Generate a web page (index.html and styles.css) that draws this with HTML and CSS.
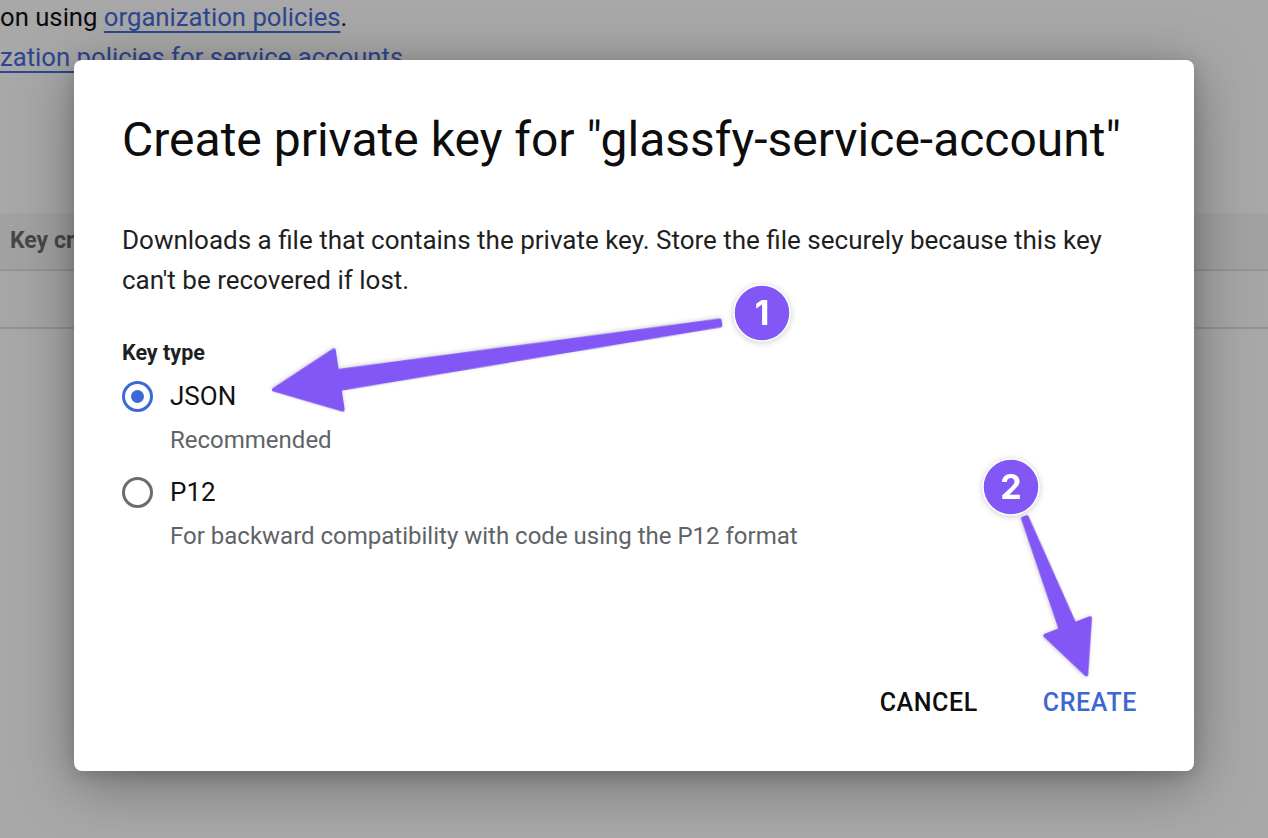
FILE: index.html
```html
<!DOCTYPE html>
<html>
<head>
<meta charset="utf-8">
<link rel="stylesheet" href="styles.css">
</head>
<body>
<div class="page">
  <p class="intro">
    <span class="line">on using <a class="link">organization policies</a>.</span>
    <span class="line"><a class="link">zation policies for service accounts</a>.</span>
  </p>
  <div class="table">
    <div class="thead"><span class="th">Key creation date</span></div>
    <div class="trow"></div>
  </div>
</div>

<div class="dialog">
  <h1 class="title">Create private key for "glassfy-service-account"</h1>
  <p class="desc">Downloads a file that contains the private key. Store the file securely because this key can't be recovered if lost.</p>
  <div class="field-label">Key type</div>
  <div class="option">
    <span class="radio checked"></span>
    <span class="opt-label">JSON</span>
  </div>
  <div class="opt-hint">Recommended</div>
  <div class="option">
    <span class="radio"></span>
    <span class="opt-label">P12</span>
  </div>
  <div class="opt-hint">For backward compatibility with code using the P12 format</div>
  <div class="actions">
    <button class="btn cancel">CANCEL</button>
    <button class="btn create">CREATE</button>
  </div>
</div>

<svg class="annot" width="1268" height="838" viewBox="0 0 1268 838">
  <g class="arrow" transform="translate(720 323) rotate(171.5)">
    <polygon points="0,-2.5 388,-9 388,9 0,2.5"/>
    <polygon points="386,-30 451,0 386,30"/>
  </g>
  <g class="arrow" transform="translate(1025 518) rotate(68.6)">
    <polygon points="0,-2 119,-7.5 119,7.5 0,2"/>
    <polygon points="117,-24 168,0 117,24"/>
  </g>
  <g class="badge">
    <circle cx="762" cy="313" r="28"/>
    <text x="762" y="325">1</text>
  </g>
  <g class="badge">
    <circle cx="1011" cy="487" r="28"/>
    <text x="1011" y="499">2</text>
  </g>
</svg>
</body>
</html>
```

FILE: styles.css
```css
html, body {
  margin: 0;
  padding: 0;
}
body {
  width: 1268px;
  height: 838px;
  overflow: hidden;
  background: #a8a8a8;
  font-family: Roboto, "Liberation Sans", sans-serif;
  position: relative;
}
.page {
  display: flex;
  flex-direction: column;
}
.intro {
  margin: -3px 0 0 0;
  font-size: 25.7px;
  line-height: 40px;
  color: #0b0b0b;
  white-space: nowrap;
}
.line {
  display: block;
}
.link {
  color: #2d4690;
  text-decoration: underline;
  text-decoration-thickness: 2px;
  text-underline-offset: 5px;
}
.table {
  margin-top: 136px;
  display: flex;
  flex-direction: column;
}
.thead {
  height: 56px;
  background: #a2a2a2;
  border-bottom: 2px solid #939393;
  display: flex;
}
.th {
  width: 64px;
  overflow: hidden;
  white-space: nowrap;
  color: #474747;
  font-weight: 700;
  font-size: 23px;
  line-height: 56px;
  padding-left: 10px;
}
.trow {
  height: 56px;
  background: #a6a6a6;
  border-bottom: 2px solid #939393;
}
.dialog {
  position: absolute;
  left: 74px;
  top: 60px;
  width: 1120px;
  height: 711px;
  box-sizing: border-box;
  background: #fff;
  border-radius: 8px;
  box-shadow: 0 12px 60px rgba(0, 0, 0, 0.35), 0 4px 16px rgba(0, 0, 0, 0.15);
  padding: 54px 57px 50px 48px;
  display: flex;
  flex-direction: column;
  color: #202124;
}
.title {
  margin: 0;
  font-size: 48px;
  line-height: 52px;
  font-weight: 400;
  color: #0d0d0d;
  white-space: nowrap;
}
.desc {
  margin: 54px 0 0 0;
  font-size: 26px;
  line-height: 40px;
  color: #1f1f1f;
  max-width: 1000px;
}
.field-label {
  margin-top: 41px;
  font-size: 21.5px;
  line-height: 24px;
  font-weight: 700;
  color: #1f1f1f;
}
.option {
  margin-top: 11px;
  height: 40px;
  display: flex;
  align-items: center;
}
.option + .opt-hint + .option {
  margin-top: 18px;
}
.radio {
  width: 31px;
  height: 31px;
  box-sizing: border-box;
  border-radius: 50%;
  border: 3.5px solid #6d6d6d;
  display: flex;
  align-items: center;
  justify-content: center;
  margin-right: 17px;
}
.radio.checked {
  border-color: #3d69d4;
}
.radio.checked::after {
  content: "";
  width: 13px;
  height: 13px;
  border-radius: 50%;
  background: #3d69d4;
}
.opt-label {
  font-size: 26px;
  color: #111;
}
.opt-hint {
  margin-top: 10px;
  margin-left: 48px;
  font-size: 24px;
  line-height: 28px;
  color: #5f6368;
}
.actions {
  margin-top: auto;
  display: flex;
  justify-content: flex-end;
  gap: 65px;
}
.btn {
  border: 0;
  background: none;
  padding: 0;
  font-family: Roboto, "Liberation Sans", sans-serif;
  font-size: 25px;
  font-weight: 500;
  line-height: 36px;
  letter-spacing: 0.6px;
  cursor: pointer;
}
.cancel {
  color: #0d0d0d;
}
.create {
  color: #3d68d2;
}
.annot {
  position: absolute;
  left: 0;
  top: 0;
  pointer-events: none;
}
.arrow polygon {
  fill: #8257f6;
  stroke: #8257f6;
  stroke-width: 4;
  stroke-linejoin: round;
}
.arrow {
  filter: drop-shadow(0 1px 2px rgba(0, 0, 0, 0.18));
}
.badge circle {
  fill: #8257f6;
  stroke: #ffffff;
  stroke-width: 1.5;
}
.badge {
  filter: drop-shadow(0 1px 3px rgba(0, 0, 0, 0.2));
}
.badge text {
  fill: #fff;
  font-family: Inter, Roboto, "Liberation Sans", sans-serif;
  font-weight: 700;
  font-size: 34px;
  text-anchor: middle;
}
```
